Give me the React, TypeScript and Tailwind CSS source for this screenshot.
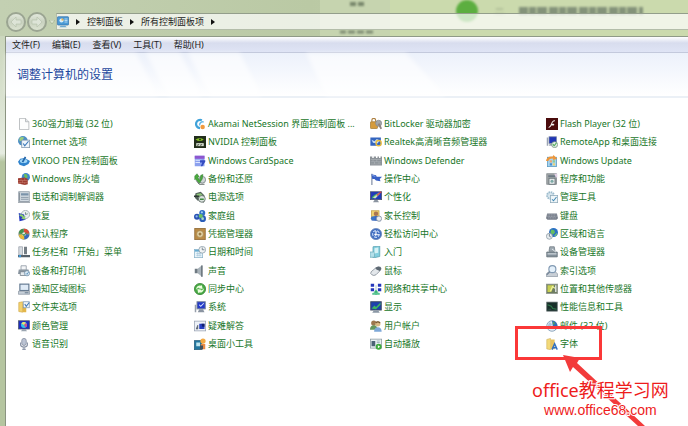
import type { ReactNode } from "react";

const icons: Record<string, ReactNode> = {
  file: (
    <>
      <path d="M2 .5h8l4.500 4.500v10.500H2z" fill="#fdfdfd" stroke="#a9adb0" />
      <path d="M10 .5v4.500h4.500" fill="#e4e6e8" stroke="#a9adb0" />
    </>
  ),
  internet: (
    <>
      <circle cx="6.500" cy="6.500" r="6.500" fill="#4e8fc4" />
      <path d="M2 3q3-3 6-1l-2 4-4 1z" fill="#9ccf7c" />
      <rect x="5" y="5.500" width="10.500" height="10" fill="#eef5fb" stroke="#7f95ab" />
      <path d="M7 10l2 3 5-6" fill="none" stroke="#3a78b8" strokeWidth="1.500" />
    </>
  ),
  pen: (
    <>
      <path d="M0 9l3-4 6-1 7 4-2 4-6 3-6-2z" fill="#2f83cd" />
      <ellipse cx="7.500" cy="8" rx="5" ry="2.800" fill="#9fd6f6" />
      <path d="M5 9l4-7 2 1-4 7z" fill="#2364a8" />
    </>
  ),
  firewall: (
    <>
      <circle cx="10.500" cy="5.500" r="5.500" fill="#3d86cf" />
      <path d="M8 1l4 1 1 4-4 1z" fill="#6fbf57" />
      <path d="M0 7l9-1 4 2v7l-4 1-9-2z" fill="#9c3c31" />
      <path d="M0 10h13M0 12.500h13M4 7v3M9 7v3M6 10v3M3 12.500v2M9 12.500v3" stroke="#cf8a7c" strokeWidth=".6" />
    </>
  ),
  phone: (
    <>
      <rect x="1" y="1" width="14" height="13" fill="#d3dbe2" stroke="#86939f" />
      <path d="M4 3h10v3H4z" fill="#7a93aa" />
      <path d="M4 8.500h10M4 11h10" stroke="#8494a3" strokeWidth="1.200" />
      <path d="M2 2v11M0 15h16" stroke="#89939c" strokeWidth="1.500" />
    </>
  ),
  recovery: (
    <>
      <circle cx="10" cy="6" r="5.500" fill="#e8eef0" stroke="#9aa9aa" />
      <path d="M10 3v3l3-1" fill="none" stroke="#5b7a6a" />
      <path d="M1 4l7 2 2 7-8 2z" fill="#2438c4" />
      <path d="M2 6q5-1 6 3l2-1-1 5-5-2 2-1q-1-2-4-2z" fill="#8fd26c" />
    </>
  ),
  defaults: (
    <>
      <circle cx="8" cy="8" r="7.500" fill="#7d9184" />
      <path d="M8 8L1 7a7 7 0 0 1 6-6z" fill="#45924b" />
      <path d="M8 8V1a7 7 0 0 1 7 6z" fill="#db4b37" />
      <path d="M8 8l7 1a7 7 0 0 1-6 6z" fill="#3667bd" />
      <path d="M8 8v7a7 7 0 0 1-7-6z" fill="#e9b938" />
      <circle cx="8" cy="8" r="2.500" fill="#f1f5ee" />
      <path d="M6 8l2 2 3-4" fill="none" stroke="#408f4c" strokeWidth="1.500" />
    </>
  ),
  taskbar: (
    <>
      <path d="M1 1h5v11H1z" fill="#d6dbe0" stroke="#9ba3ab" />
      <path d="M8 1h4v10H8z" fill="#757d84" />
      <path d="M0 12h16v3H0z" fill="#56616b" />
      <path d="M1 12h3v3H1z" fill="#4099d8" />
    </>
  ),
  printer: (
    <>
      <path d="M4 1h7v6H4z" fill="#f4f6f8" stroke="#87919b" />
      <path d="M1 6h13l1 6H0z" fill="#8b97a1" />
      <path d="M3 9h9v5H3z" fill="#e5eaee" stroke="#6d7984" />
      <circle cx="12" cy="11" r="3.500" fill="#dcebf5" stroke="#6f8da6" />
      <path d="M10.500 11l1.500 1.500 2-3" stroke="#3576aa" fill="none" />
    </>
  ),
  tray: (
    <>
      <rect x="2.500" y="1.500" width="12" height="8.500" fill="#dfeaf6" stroke="#5f758d" strokeWidth="1.500" />
      <path d="M.5 11h15v4H.5z" fill="#c7d0d9" stroke="#8b96a2" />
      <path d="M9 13h5" stroke="#4c6076" />
    </>
  ),
  folder: (
    <>
      <path d="M1 2l5-1v14l-5-1z" fill="#f2d06d" stroke="#c59c38" strokeWidth=".7" />
      <path d="M6 4h5v11H6z" fill="#e3b64a" />
      <rect x="7" y="1" width="8" height="8" fill="#eff5fa" stroke="#7b97b3" />
      <path d="M9 4l2 3 4-5" fill="none" stroke="#3b75b4" strokeWidth="1.400" />
    </>
  ),
  color: (
    <>
      <rect x=".7" y="1" width="14.600" height="11" fill="#1f2dc0" stroke="#4a566c" />
      <circle cx="8" cy="6.500" r="4" fill="#33c3e8" />
      <path d="M8 6.500L4.500 4.500a4 4 0 0 1 6-1z" fill="#f0e26d" />
      <path d="M8 6.500l3-2.500a4 4 0 0 1-1 6z" fill="#d84a8b" />
      <path d="M6 12h4l2 3H4z" fill="#9ba6b1" />
    </>
  ),
  mic: (
    <>
      <rect x="5" y=".5" width="6" height="9.500" rx="3" fill="#bcc4d4" stroke="#7d879b" />
      <path d="M3.500 6v3q0 3 4.500 3t4.500-3V6M8 12v4M5.500 15h5" stroke="#8690a4" fill="none" strokeWidth="1.500" />
    </>
  ),
  akamai: (
    <>
      <path d="M10.500 3A5.500 5.500 0 1 0 8 13.500" fill="none" stroke="#3fa2da" strokeWidth="3" />
      <path d="M13 5.500a4 4 0 0 0-5.500 4.500" fill="none" stroke="#6cbbe6" strokeWidth="2" />
      <circle cx="11.500" cy="12" r="3" fill="#f19a3e" />
    </>
  ),
  nvidia: (
    <>
      <rect width="16" height="16" fill="#222e1c" />
      <path d="M2 4.500q6-4 11 0-5 4-11 0z" fill="#86bf25" />
      <circle cx="8" cy="4.500" r="1.300" fill="#20301a" />
      <path d="M3 9.500h10v4H3z" fill="#dce3d7" />
      <path d="M5 13.500v-2h2M9 13.500v-2h2" stroke="#354231" fill="none" />
    </>
  ),
  cardspace: (
    <>
      <rect x="1" y="1" width="13" height="14" fill="#8ba0ee" />
      <path d="M1 1h13v4H1z" fill="#8e56cf" />
      <path d="M2 7h8M2 10h6" stroke="#dce5ff" strokeWidth="1.500" />
      <path d="M8 7h7v2l-2 3-2 3H9l2-5H8z" fill="#344bc1" />
    </>
  ),
  backup: (
    <>
      <circle cx="11" cy="9" r="4.500" fill="#cfd6d7" stroke="#727d7f" />
      <path d="M1 4l3-3 3 4-2 1 3 4 1-7 3-1-1 6-4 6-5-6-1 1z" fill="#4aaa3d" stroke="#2a6f2e" strokeWidth=".6" />
      <path d="M3 10l4 5h7" stroke="#5c6663" strokeWidth="1.300" fill="none" />
    </>
  ),
  power: (
    <>
      <path d="M2 3l7-2 5 5-2 5-7 2-4-4z" fill="#52625b" />
      <path d="M3 4l6-1 3 3-5 4z" fill="#8fc779" />
      <path d="M0 7h7M9 11l4 4" stroke="#2d3833" strokeWidth="2" />
      <circle cx="10.500" cy="10.500" r="4.500" fill="#dbe3df" stroke="#525f59" />
      <path d="M8 11h5" stroke="#3c8b3e" strokeWidth="2" />
    </>
  ),
  homegroup: (
    <>
      <circle cx="11" cy="4" r="4" fill="#2f6ec5" />
      <circle cx="4" cy="9" r="4" fill="#2852b4" />
      <circle cx="11.500" cy="11.500" r="4.500" fill="#2c5fb9" />
      <circle cx="9" cy="8" r="2.800" fill="#6dc35d" />
      <circle cx="10.500" cy="3" r="1.500" fill="#9fd0f3" />
      <circle cx="3.500" cy="8.500" r="1.500" fill="#8fb8ec" />
      <circle cx="11.500" cy="11.500" r="1.800" fill="#a8ddc8" />
    </>
  ),
  vault: (
    <>
      <rect x="1" y=".5" width="14" height="15" fill="#b98a45" stroke="#8c6630" />
      <circle cx="8" cy="8" r="4.500" fill="#e6d7ab" stroke="#a5874f" />
      <circle cx="8" cy="8" r="2" fill="#9a7a42" />
    </>
  ),
  date: (
    <>
      <rect x=".5" y="4.500" width="11" height="11" fill="#e9f4fa" stroke="#8bb4ca" />
      <path d="M1 5h10v2.500H1z" fill="#68acd1" />
      <path d="M3 10h7M3 12.500h7M5 8v6M8 8v6" stroke="#a1c5d8" strokeWidth=".8" />
      <circle cx="11" cy="5" r="4.500" fill="#f1f3f4" stroke="#8799a5" />
      <path d="M11 2v3h3" stroke="#5a6b77" fill="none" />
    </>
  ),
  sound: (
    <>
      <path d="M1 5h4v6H1z" fill="#6f7a82" />
      <path d="M5 5l6-5v16l-6-5z" fill="#a9b3ba" />
      <path d="M10.500 .5v15" stroke="#67727b" strokeWidth="2" />
    </>
  ),
  sync: (
    <>
      <circle cx="8" cy="8" r="7.500" fill="#48aa45" stroke="#358233" />
      <path d="M3 9a5 5 0 0 1 6.500-5.500l1-1 1 5.500-5.500-1 1-1q-2 0-4 3zM13 7a5 5 0 0 1-6.500 5.500l-1 1-1-5.500 5.500 1-1 1q2 0 4-3z" fill="#ecffdf" />
    </>
  ),
  system: (
    <>
      <rect x="4" y="1" width="11" height="9.500" fill="#2339c8" stroke="#77849a" strokeWidth="1.300" />
      <path d="M7 5l2 2 4-4" fill="none" stroke="#dce6ff" strokeWidth="1.400" />
      <path d="M1 5h2v10H1z" fill="#979faa" />
      <path d="M7 11h5l2 4H5z" fill="#8a94a1" />
    </>
  ),
  trouble: (
    <>
      <rect x=".5" y="1.500" width="15" height="13" fill="#edf1f7" stroke="#98a2b2" />
      <path d="M7 5h7v7H7z" fill="#263fc2" />
      <path d="M3 12l2-5v5z" fill="#445061" stroke="#5a6371" />
      <path d="M10 5h4v4h-3z" fill="#10206f" />
    </>
  ),
  gadgets: (
    <>
      <rect x=".5" y="3.500" width="10" height="12" fill="#23779f" stroke="#28607d" />
      <path d="M3 6h5v5H3z" fill="#bfe6ef" />
      <circle cx="12" cy="4" r="3.500" fill="#f3a942" />
      <path d="M9 8h6v7H9z" fill="#e88a45" />
      <path d="M8 10h4v5H8z" fill="#3f5360" />
    </>
  ),
  bitlocker: (
    <>
      <rect x=".5" y="5" width="9.500" height="9" rx="1" fill="#d59b3d" stroke="#a67c36" />
      <path d="M2.500 5V3q0-2.500 2.500-2.500T7.500 3v2" fill="none" stroke="#ad8041" strokeWidth="1.500" />
      <circle cx="11.500" cy="7" r="4" fill="#a3a7aa" stroke="#84888b" />
      <path d="M10 8l4 7 2-1-3-7z" fill="#8e8480" />
    </>
  ),
  realtek: (
    <>
      <rect x=".5" y="2" width="14" height="11" fill="#3465bf" />
      <path d="M2 5l4 2 3-3 4 2-3 4-6-1z" fill="#c5dcf8" />
      <circle cx="11.500" cy="9.500" r="3.500" fill="none" stroke="#e8bc3d" strokeWidth="1.800" />
    </>
  ),
  defender: (
    <>
      <path d="M0 2h3v2h2V2h3v2h2V2h2v2h2V2h2v12H0z" fill="#8c9298" />
      <path d="M1 6h14M1 9h14M1 12h14M4 6v3M9 6v3M6 9v3M12 9v3" stroke="#b4babe" strokeWidth=".7" />
    </>
  ),
  flag: (
    <>
      <path d="M2.500 1v15" stroke="#8d99ae" strokeWidth="1.800" />
      <path d="M2 1.500l6 1.500 1 2 7 0-3 3 1 3-6-1-2-2-3 0z" fill="#3860c5" />
      <path d="M3 3l4 1.500" stroke="#9fbbf0" fill="none" />
    </>
  ),
  personalize: (
    <>
      <rect x=".5" y="1" width="15" height="10.500" fill="#2239bb" stroke="#4a5268" />
      <path d="M2 10q2-6 11-7l-5 6z" fill="#48b559" />
      <path d="M4 9l8-7 1 2-6 6z" fill="#c9dfc9" />
      <path d="M9 6l6-5" stroke="#d24343" strokeWidth="1.500" />
      <path d="M6 12h4l2 3H4z" fill="#8b94a0" />
    </>
  ),
  parental: (
    <>
      <rect x="2" y="1" width="10" height="11" fill="#efd271" stroke="#be9d46" />
      <circle cx="8" cy="5" r="3" fill="#a97652" />
      <path d="M2 14q1-7 7-6t5 7z" fill="#3c69be" />
      <circle cx="12" cy="11.500" r="3.500" fill="#e8edf3" stroke="#7a8798" />
      <circle cx="4" cy="11" r="2.800" fill="#3a75c8" />
    </>
  ),
  ease: (
    <>
      <circle cx="8" cy="8" r="7.500" fill="#426fc0" stroke="#6a86b8" />
      <circle cx="8" cy="8" r="4.500" fill="none" stroke="#c6dbfa" strokeWidth="1.400" strokeDasharray="4 1.500" />
      <path d="M8 4v5h4M6 8l2 2" stroke="#fff" strokeWidth="1.500" fill="none" />
    </>
  ),
  start: (
    <>
      <path d="M4 1l9-1v14l-9 2z" fill="#83cfdf" stroke="#599faf" />
      <path d="M0 8h6v7H0z" fill="#b4dfe9" stroke="#6faebb" />
      <path d="M6 3l5-1v7l-5 1z" fill="#d5f2f5" />
    </>
  ),
  mouse: (
    <>
      <path d="M1.500 9l6-5q4-3 6.500-1 2 2-1 5l-5 5q-3 2-5.500 0-2.500-1-1-4z" fill="#e3e7eb" stroke="#7c858f" />
      <path d="M7 4q4-3 7-1 2 2-1 5L8.500 6z" fill="#5d6872" />
    </>
  ),
  network: (
    <>
      <path d="M1 1h4.500v4H1zM10.500 1H15v4h-4.500zM1 7h4.500v4H1zM10.500 7H15v4h-4.500z" fill="#2336ba" />
      <path d="M8 3v8" stroke="#97b8c6" />
      <path d="M8 9l3.500 4H9v3H7v-3H4.500z" fill="#3ab477" />
      <path d="M3 14.500h10" stroke="#5cc595" strokeWidth="2.500" />
    </>
  ),
  display: (
    <>
      <rect x="1" y="1" width="14" height="11" fill="#1e42ad" stroke="#3d4a60" strokeWidth="1.300" />
      <path d="M2 10l4-4 2 2 6-6v3L8 11z" fill="#3db960" />
      <path d="M5 12.500h6l2 3H3z" fill="#8a97a5" />
    </>
  ),
  users: (
    <>
      <circle cx="5" cy="4" r="3.500" fill="#9d774e" />
      <path d="M0 13q0-6 5-6t5 6z" fill="#65975d" />
      <circle cx="10.500" cy="5" r="3.500" fill="#d9b985" />
      <path d="M5.500 15.500q0-6 5-6t5 6z" fill="#7ea8d8" />
      <path d="M7.500 4q3-3 6 0" stroke="#74532f" fill="none" strokeWidth="1.500" />
    </>
  ),
  autoplay: (
    <>
      <rect x=".5" y="1.500" width="15" height="12" fill="#eaf1f3" stroke="#87989e" />
      <path d="M2 4h5v7H2z" fill="#4b6375" />
      <path d="M9 4h4M9 6h4" stroke="#8ba2af" />
      <circle cx="11.500" cy="11.500" r="4" fill="#3fab3e" />
      <path d="M10.500 9.500v4l3-2z" fill="#fff" />
    </>
  ),
  flash: (
    <>
      <rect width="16" height="16" fill="#4a0b0c" />
      <path d="M12 3.500q-3.500 0-4.500 4.500h3v1.500H7q-1 3-3.500 3 2.500-1 3.500-4.500 1.500-5 5-4.500z" fill="#fff" stroke="#fff" strokeWidth=".6" />
    </>
  ),
  remote: (
    <>
      <rect x="4" y="1" width="10" height="9" fill="#2036b5" stroke="#7e8ba8" />
      <path d="M1 2h2v11H1zM5 10h7l1 3H4z" fill="#9ba4b2" />
      <circle cx="11.500" cy="11.500" r="4" fill="#e3eee7" stroke="#738e7d" />
      <path d="M9 11l2 2 3-4" fill="none" stroke="#4ea95a" strokeWidth="1.500" />
    </>
  ),
  update: (
    <>
      <rect x="2" y="3" width="12" height="12.500" fill="#a7d5ef" stroke="#5797bf" />
      <path d="M5 7h3v3H5z" fill="#e9a477" />
      <path d="M9 7h3v3H9z" fill="#8fcb97" />
      <path d="M5 11h3v3H5z" fill="#4a8fd2" />
      <path d="M9 11h3v3H9z" fill="#ecd07a" />
      <path d="M0 8q1-7 9-6l1-2 5 5-6 2 1-2q-5-1-7 3z" fill="#ee963a" />
    </>
  ),
  programs: (
    <>
      <rect x="1" y="1" width="13" height="14" fill="#a0a5a7" stroke="#80868a" />
      <path d="M3 3h11v2.500H3z" fill="#6b7883" />
      <rect x="4" y="7" width="8" height="8" fill="#e4e8e9" stroke="#5f6c70" />
      <circle cx="8" cy="11" r="2" fill="#7ba9a5" />
      <path d="M11 1h4v5h-2z" fill="#e0d0e4" />
    </>
  ),
  admin: (
    <>
      <circle cx="6" cy="6" r="4.500" fill="#d8e6ee" stroke="#9dbccd" strokeWidth="2.500" strokeDasharray="2 1" />
      <rect x="6" y="6" width="9.500" height="9.500" fill="#eef5f8" stroke="#8fa9b9" />
      <path d="M8 11l2 2 4-5" fill="none" stroke="#4388b4" strokeWidth="1.400" />
    </>
  ),
  keyboard: (
    <>
      <path d="M1.500 4.500h13L16 11l-2 2H2l-2-2z" fill="#777e8a" />
      <path d="M2 6.500h12M2 8.500h12M3 10.500h10" stroke="#b9c0ca" strokeWidth=".8" strokeDasharray="1.500 .7" />
    </>
  ),
  region: (
    <>
      <circle cx="10" cy="6" r="6" fill="#2b71c4" />
      <path d="M7 2l4 1 1 3-3 3-3-3z" fill="#67bf60" />
      <path d="M11 10l4-4-1 4-2 1z" fill="#79c76b" />
      <circle cx="4.500" cy="11" r="4" fill="#e7ecef" stroke="#8a98a2" />
      <path d="M4.500 8v3l2 1" stroke="#586873" fill="none" />
    </>
  ),
  device: (
    <>
      <path d="M5 1h6l1 6H4z" fill="#9ea9b1" stroke="#707b84" />
      <path d="M1 8h14v6.500H1z" fill="#83909a" stroke="#606d76" />
      <path d="M2 10.500h12M8 4l5 4" stroke="#e2e8ec" strokeWidth="1.300" />
    </>
  ),
  index: (
    <>
      <path d="M.5 12l3-3h9l3 3v3.500H.5z" fill="#c8ced5" stroke="#8f99a4" />
      <circle cx="8.500" cy="5.500" r="4.700" fill="#e4f0fa" stroke="#8199b2" strokeWidth="1.500" />
      <path d="M5 9l-4 4" stroke="#78889a" strokeWidth="2" />
    </>
  ),
  sensor: (
    <>
      <rect x=".5" y="1.500" width="15" height="12.500" fill="#6e7d62" stroke="#8e958b" />
      <path d="M2 3h9l-4 9H2z" fill="#c8cf52" />
      <path d="M6 11l3-7M9 5l3 2" stroke="#eef2a6" strokeWidth="1.500" />
      <path d="M13 3v9" stroke="#d9dedb" strokeWidth="2" />
    </>
  ),
  performance: (
    <>
      <rect x="1" y="1.500" width="14" height="12" fill="#18302a" stroke="#5b6768" />
      <path d="M2 5l5 2 2 3 5 1" fill="none" stroke="#2f7a4b" strokeWidth="1.500" />
      <path d="M3 11h4" stroke="#3b5b54" />
    </>
  ),
  mail: (
    <>
      <circle cx="8" cy="8" r="7" fill="#e8eff6" stroke="#7291ad" />
      <path d="M8 1a7 7 0 0 1 5 12l-4-5z" fill="#2f6fb6" />
      <path d="M4 3q3 0 4 3l-3 5-3-2z" fill="#a9c8de" />
      <path d="M9 2l3 2-2 3z" fill="#54a859" />
    </>
  ),
  fonts: (
    <>
      <path d="M1 2l5-1.500v15l-5-1z" fill="#f3d979" stroke="#caa84d" strokeWidth=".7" />
      <path d="M6 2h5.500v13H6z" fill="#e7c25f" />
      <path d="M8 15.500l3.500-8 3.500 8M9.500 13h4" fill="none" stroke="#2d6ec3" strokeWidth="1.800" />
    </>
  ),
  panel: (
    <>
      <rect x=".5" y="1" width="15" height="11" rx="1" fill="#4a9ad6" stroke="#3573ab" />
      <circle cx="6" cy="6" r="2.800" fill="#d9eefa" />
      <path d="M6 6V3a3 3 0 0 1 3 3z" fill="#edae4b" />
      <path d="M10 4h4M10 6h4M10 8h4" stroke="#d8edfb" />
      <path d="M5 13h6l2 2H3z" fill="#6da8d0" />
    </>
  ),
};

// Four columns, filled from top to bottom
const columns: [string, string][][] = [
  [
    ["file", "360强力卸载 (32 位)"],
    ["internet", "Internet 选项"],
    ["pen", "VIKOO PEN 控制面板"],
    ["firewall", "Windows 防火墙"],
    ["phone", "电话和调制解调器"],
    ["recovery", "恢复"],
    ["defaults", "默认程序"],
    ["taskbar", "任务栏和「开始」菜单"],
    ["printer", "设备和打印机"],
    ["tray", "通知区域图标"],
    ["folder", "文件夹选项"],
    ["color", "颜色管理"],
    ["mic", "语音识别"],
  ],
  [
    ["akamai", "Akamai NetSession 界面控制面板 ..."],
    ["nvidia", "NVIDIA 控制面板"],
    ["cardspace", "Windows CardSpace"],
    ["backup", "备份和还原"],
    ["power", "电源选项"],
    ["homegroup", "家庭组"],
    ["vault", "凭据管理器"],
    ["date", "日期和时间"],
    ["sound", "声音"],
    ["sync", "同步中心"],
    ["system", "系统"],
    ["trouble", "疑难解答"],
    ["gadgets", "桌面小工具"],
  ],
  [
    ["bitlocker", "BitLocker 驱动器加密"],
    ["realtek", "Realtek高清晰音频管理器"],
    ["defender", "Windows Defender"],
    ["flag", "操作中心"],
    ["personalize", "个性化"],
    ["parental", "家长控制"],
    ["ease", "轻松访问中心"],
    ["start", "入门"],
    ["mouse", "鼠标"],
    ["network", "网络和共享中心"],
    ["display", "显示"],
    ["users", "用户帐户"],
    ["autoplay", "自动播放"],
  ],
  [
    ["flash", "Flash Player (32 位)"],
    ["remote", "RemoteApp 和桌面连接"],
    ["update", "Windows Update"],
    ["programs", "程序和功能"],
    ["admin", "管理工具"],
    ["keyboard", "键盘"],
    ["region", "区域和语言"],
    ["device", "设备管理器"],
    ["index", "索引选项"],
    ["sensor", "位置和其他传感器"],
    ["performance", "性能信息和工具"],
    ["mail", "邮件 (32 位)"],
    ["fonts", "字体"],
  ],
];

const menus = ["文件(F)", "编辑(E)", "查看(V)", "工具(T)", "帮助(H)"];

function Icon({ name }: { name: string }) {
  return (
    <svg viewBox="0 0 16 16" className="w-3 h-3 shrink-0" aria-hidden="true">
      {icons[name]}
    </svg>
  );
}

function Crumb() {
  return (
    <svg viewBox="0 0 4 6" className="w-1 h-1.5 shrink-0" aria-hidden="true">
      <path d="M0 0l4 3-4 3z" fill="#111" />
    </svg>
  );
}

function NavButton({ label, flip }: { label: string; flip?: boolean }) {
  return (
    <button
      aria-label={label}
      className="w-5 h-5 shrink-0 rounded-full border-2 border-[#9ba592] bg-linear-to-b from-[#e2e8dc] via-[#c8d1bf] to-[#dce4d2] flex items-center justify-center"
    >
      <svg viewBox="0 0 12 12" className={`w-3 h-3 ${flip ? "rotate-180" : ""}`} aria-hidden="true">
        <path d="M6 1L1 6l5 5V8h5V4H6z" fill="#dde4d7" stroke="#b4bfaa" strokeWidth=".6" />
      </svg>
    </button>
  );
}

function TitleBar() {
  return (
    <header className="relative h-9 flex items-center pt-[7px] overflow-hidden bg-linear-to-r from-[#c3d0b2] via-[#bac9a4] via-45% to-[#cbdab0]">
      {/* Desktop showing through the glass */}
      <div className="absolute inset-y-0 left-80 right-0 bg-[#cbdaad]" />
      <div className="absolute inset-y-0 left-80 w-[70px] bg-[#c6d4af]" />
      <svg className="absolute top-0 left-[340px] w-[310px] h-9 blur-[1px]" viewBox="0 0 310 36" aria-hidden="true">
        <circle cx="127" cy="11" r="11" fill="#5cae40" />
        <path d="M10 4h6M18 4h6" stroke="#77866b" strokeWidth="4" />
        <path d="M-1 32h34" stroke="#7d8b72" strokeWidth="3" strokeDasharray="7 2" />
        <path d="M156 9h7M155 14h9" stroke="#9aaa88" />
        <path d="M179 11h124" stroke="#84937a" strokeWidth="8" strokeDasharray="9 1 7 1 10 2" />
      </svg>

      <div className="relative flex items-center gap-px pl-[6px]">
        <NavButton label="后退" />
        <NavButton label="前进" flip />
        <button aria-label="最近的页面" className="w-2 flex justify-center">
          <svg viewBox="0 0 6 4" className="w-1.5 h-1" aria-hidden="true">
            <path d="M0 0h6L3 4z" fill="#dbe4cf" stroke="#a2b092" strokeWidth=".7" />
          </svg>
        </button>
      </div>

      <nav className="relative flex-1 h-[17px] flex items-center gap-[7px] border border-r-0 border-t-[#939e8b] border-[#b3bda9] bg-white/70 text-[9px] text-[#222]">
        <Icon name="panel" />
        <Crumb />
        <button>控制面板</button>
        <Crumb />
        <button>所有控制面板项</button>
        <Crumb />
      </nav>
    </header>
  );
}

export default function App() {
  return (
    <div className="relative min-h-screen flex flex-col overflow-hidden bg-linear-to-b from-[#c3d0b2] via-[#e6ece1] via-36% to-[#b5c5a0] to-38% font-['Noto_Sans','Noto_Sans_CJK_SC',sans-serif]">
      <TitleBar />

      <div className="flex-1 flex flex-col ml-[5px] border-l border-[#8b9481] bg-white">
        <div className="h-[17px] pl-1.5 flex items-center gap-3 border-t border-t-[#8f9a87] border-b border-b-[#c3c9dc] bg-linear-to-b from-white via-[#d8ddee] via-40% to-[#dfe4f5] text-[9px] text-[#222]">
          {menus.map((menu) => (
            <button key={menu} className="whitespace-nowrap">
              {menu}
            </button>
          ))}
        </div>

        <div className="relative h-[45px] pl-[11px] flex items-center border-b-2 border-[#ebf0f6] bg-linear-to-b from-[#ecf1fb] to-white">
          {/* Soft light rays */}
          <svg className="absolute inset-0 w-full h-full blur-[2px]" viewBox="0 0 682 43" preserveAspectRatio="none" aria-hidden="true">
            <path d="M0 0h130l22 43H0zM140 0h34l22 43H162zM182 0h52l22 43H204zM300 0h100l40 43H320z" fill="#fff" opacity=".6" />
          </svg>
          <h1 className="relative text-xs text-[#1d489e]">调整计算机的设置</h1>
        </div>

        <main className="grid grid-cols-[repeat(3,176px)_1fr] pl-3 pt-[17px]">
          {columns.map((column, idx) => (
            <ul key={idx} className="min-h-[238px] grid auto-rows-fr">
              {column.map(([icon, label]) => (
                <li key={icon} className="flex items-center">
                  <a href="#" className="flex items-center gap-[2px] text-[9px] leading-4 text-[#187628] whitespace-nowrap hover:underline">
                    <Icon name={icon} />
                    {label}
                  </a>
                </li>
              ))}
            </ul>
          ))}
        </main>
      </div>

      {/* Annotation over the fonts entry */}
      <div className="absolute left-[515px] top-[326px] w-[87px] h-[34px] border-3 border-[#fb3838] pointer-events-none" />
      <svg className="absolute left-[560px] top-[352px] w-[90px] h-[78px] pointer-events-none" viewBox="0 0 90 78" aria-hidden="true">
        <path d="M3 3l17 3-3 5L85 74h-7L13 15l-3 5z" fill="#f23b3b" />
      </svg>
      <div className="absolute left-[532px] top-[378px] text-center text-[#ee1c1c] [paint-order:stroke] [-webkit-text-stroke:2px_white]">
        <p className="text-lg leading-6 whitespace-nowrap">office教程学习网</p>
        <p className="text-sm leading-4 font-['Liberation_Sans',sans-serif]">www.office68.com</p>
      </div>
    </div>
  );
}
